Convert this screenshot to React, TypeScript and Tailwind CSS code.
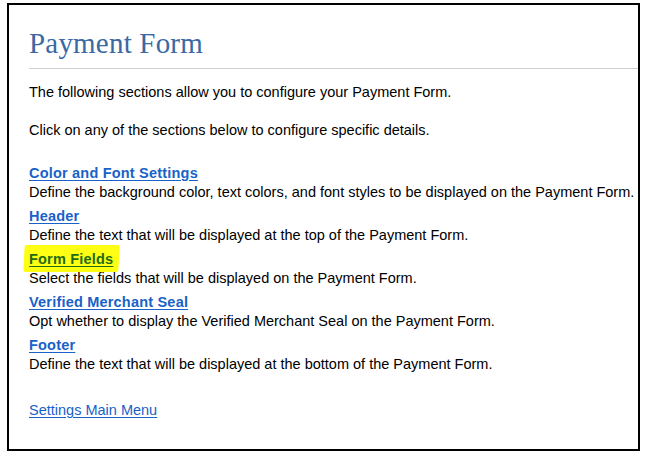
const sections = [
  {
    title: 'Color and Font Settings',
    text: 'Define the background color, text colors, and font styles to be displayed on the Payment Form.',
  },
  { title: 'Header', text: 'Define the text that will be displayed at the top of the Payment Form.' },
  { title: 'Form Fields', text: 'Select the fields that will be displayed on the Payment Form.', marked: true },
  { title: 'Verified Merchant Seal', text: 'Opt whether to display the Verified Merchant Seal on the Payment Form.' },
  { title: 'Footer', text: 'Define the text that will be displayed at the bottom of the Payment Form.' },
];

export default function App() {
  return (
    <div className="w-[645px] h-[457px] bg-white pt-[3px] pl-[7px] overflow-hidden">
      <div className="w-[633px] h-[448px] border-2 border-black pl-[20px] text-[14.5px] leading-[18px] text-black font-['Liberation_Sans',Arial,sans-serif]">
        <h1 className="pt-[21px] pb-[8px] text-[29px] leading-[34px] text-[#3a69a3] font-['Liberation_Serif','Times_New_Roman',serif] tracking-[0.2px]">
          Payment Form
        </h1>
        <div className="h-px bg-[#cfcfcf]" />

        <p className="mt-[14px]">The following sections allow you to configure your Payment Form.</p>
        <p className="mt-[20px]">Click on any of the sections below to configure specific details.</p>

        <div className="mt-[25px] flex flex-col gap-[6px]">
          {sections.map((s) => (
            <div key={s.title}>
              {s.marked ? (
                <span className="relative inline-block">
                  <span className="absolute -left-[5px] -right-[6px] -top-[5px] -bottom-[4px] bg-[#ffff14] rounded-[2px] -skew-x-3" />
                  <a href="#" className="relative font-bold tracking-[0.2px] text-[#1d6b12] underline underline-offset-2">
                    {s.title}
                  </a>
                </span>
              ) : (
                <a href="#" className="font-bold tracking-[0.2px] text-[#1862c8] underline underline-offset-2">
                  {s.title}
                </a>
              )}
              <div className="mt-[1px]">{s.text}</div>
            </div>
          ))}
        </div>

        <a href="#" className="inline-block mt-[28px] text-[#1862c8] underline underline-offset-2">
          Settings Main Menu
        </a>
      </div>
    </div>
  );
}
